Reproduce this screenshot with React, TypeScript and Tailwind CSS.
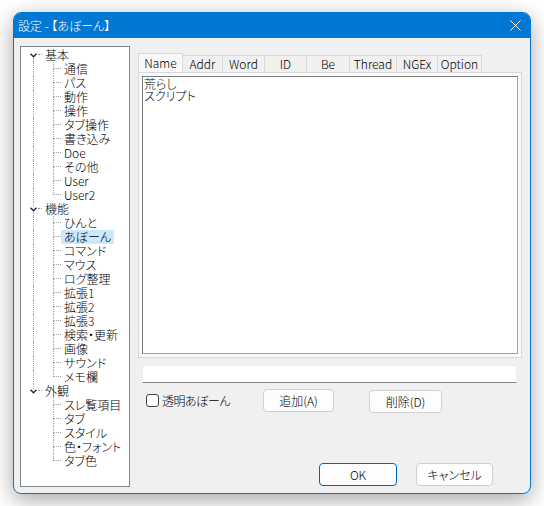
import React from 'react';

const FONT = "font-['Noto_Sans_CJK_JP','Noto_Sans',sans-serif] [font-feature-settings:'palt'] font-light";

interface Group {
  label: string;
  children: string[];
}

const TREE: Group[] = [
  { label: '基本', children: ['通信', 'パス', '動作', '操作', 'タブ操作', '書き込み', 'Doe', 'その他', 'User', 'User2'] },
  {
    label: '機能',
    children: ['ひんと', 'あぼーん', 'コマンド', 'マウス', 'ログ整理', '拡張1', '拡張2', '拡張3', '検索・更新', '画像', 'サウンド', 'メモ欄'],
  },
  { label: '外観', children: ['スレ覧項目', 'タブ', 'スタイル', '色・フォント', 'タブ色'] },
];

const TABS = [
  { label: 'Name', w: 'w-[45px]' },
  { label: 'Addr', w: 'w-[40px]' },
  { label: 'Word', w: 'w-[42px]' },
  { label: 'ID', w: 'w-[42px]' },
  { label: 'Be', w: 'w-[43px]' },
  { label: 'Thread', w: 'w-[47px]' },
  { label: 'NGEx', w: 'w-[41px]' },
  { label: 'Option', w: 'w-[44px]' },
];

const SELECTED = 'あぼーん';
const DOT = 'border-dotted border-[#a0a0a0]';

const Chevron = () => (
  <svg width="7" height="5" viewBox="0 0 7 5" className="shrink-0">
    <polyline points="0.5,0.8 3.5,3.8 6.5,0.8" fill="none" stroke="#222" strokeWidth="1.3" />
  </svg>
);

const GroupRow: React.FC<{ label: string; first: boolean; last: boolean }> = ({ label, first, last }) => (
  <div className="flex h-[14px]">
    <div className="w-[8px]" />
    <div className="w-[9px] flex flex-col items-center">
      <div className={`h-[5px] w-px ${first ? '' : `border-l ${DOT}`}`} />
      <Chevron />
      <div className={`flex-1 w-px ${last ? '' : `border-l ${DOT}`}`} />
    </div>
    <div className="w-[4px] flex flex-col">
      <div className={`h-[7px] border-b ${DOT}`} />
    </div>
    <span className="px-[3px] text-[12px] leading-[14px] text-black">{label}</span>
  </div>
);

const ChildRow: React.FC<{ label: string; groupLast: boolean; last: boolean }> = ({ label, groupLast, last }) => (
  <div className="flex h-[14px]">
    <div className="w-[12px]" />
    <div className={`w-[20px] ${groupLast ? '' : `border-l ${DOT}`}`} />
    <div className="w-[8px] flex flex-col">
      <div className={`h-[7px] border-l border-b ${DOT}`} />
      <div className={`flex-1 ${last ? '' : `border-l ${DOT}`}`} />
    </div>
    <span
      className={`px-[3px] text-[12px] leading-[14px] text-black ${label === SELECTED ? 'bg-[#cce8ff]' : ''}`}
    >
      {label}
    </span>
  </div>
);

const Button: React.FC<{ label: string; w: string; primary?: boolean }> = ({ label, w, primary }) => (
  <button
    className={`${w} h-[23px] rounded-[4px] border text-[12px] leading-none text-black ${
      primary ? 'border-[#0067c0] bg-[#fdfdfd]' : 'border-[#d0d0d0] bg-[#fdfdfd]'
    }`}
  >
    {label}
  </button>
);

export default function App() {
  return (
    <div className={`w-[544px] h-[506px] bg-white pl-[13px] pt-[12px] ${FONT}`}>
      <div className="w-[518px] h-[482px] rounded-[8px] border border-[#0078d4] bg-[#f0f0f0] overflow-hidden flex flex-col shadow-[0_6px_22px_rgba(0,0,0,0.35)]">
        {/* title bar */}
        <div className="h-[25px] bg-[#0078d4] flex items-center justify-between pl-[4px] pr-[9px] shrink-0">
          <span className="text-[12px] text-white leading-none">設定 - 【あぼーん】</span>
          <svg width="11" height="11" viewBox="0 0 11 11">
            <path d="M0.5 0.5 L10.5 10.5 M10.5 0.5 L0.5 10.5" stroke="#fff" strokeWidth="1" />
          </svg>
        </div>

        <div className="flex pl-[6px] pt-[8px]">
          {/* tree */}
          <div className="w-[110px] h-[441px] border border-[#828790] bg-white pt-[1px]">
            {TREE.map((g, gi) => (
              <div key={g.label}>
                <GroupRow label={g.label} first={gi === 0} last={gi === TREE.length - 1} />
                {g.children.map((c, ci) => (
                  <ChildRow
                    key={c}
                    label={c}
                    groupLast={gi === TREE.length - 1}
                    last={ci === g.children.length - 1}
                  />
                ))}
              </div>
            ))}
          </div>

          {/* right side */}
          <div className="ml-[8px] w-[384px] pt-[7px] flex flex-col">
            <div className="flex items-end h-[19px]">
              {TABS.map((t, i) => (
                <div
                  key={t.label}
                  className={`${t.w} flex items-center justify-center text-[12px] leading-none text-black border-t border-r border-[#d9d9d9] ${
                    i === 0 ? 'h-[19px] border-l bg-[#f9f9f9] pb-[1px]' : 'h-[17px] bg-[#f0f0f0]'
                  }`}
                >
                  {t.label}
                </div>
              ))}
            </div>
            <div className="border border-[#d9d9d9] bg-[#f9f9f9] p-[3px]">
              <div className="h-[278px] border border-[#7a7a7a] border-r-[#a0a0a0] border-b-[#a0a0a0] bg-white px-px pt-[1px] text-[12px] leading-[12px] text-black">
                <div>荒らし</div>
                <div>スクリプト</div>
              </div>
            </div>

            <div className="ml-[4px] mt-[7px] w-[375px] h-[18px] bg-white border border-[#ececec] border-b-[#868686]" />

            <div className="flex items-center mt-[6px] h-[23px]">
              <div className="w-[125px] flex items-center">
                <div className="ml-[8px] w-[13px] h-[13px] rounded-[3px] border border-[#444] bg-white shrink-0" />
                <span className="ml-[3px] text-[12px] text-black leading-none tracking-[-0.5px]">透明あぼーん</span>
              </div>
              <Button label="追加(A)" w="w-[71px]" />
              <div className="ml-[35px]">
                <Button label="削除(D)" w="w-[73px]" />
              </div>
            </div>

            <div className="flex justify-end gap-[19px] pr-[29px] mt-[51px]">
              <Button label="OK" w="w-[78px]" primary />
              <Button label="キャンセル" w="w-[77px]" />
            </div>
          </div>
        </div>
      </div>
    </div>
  );
}
